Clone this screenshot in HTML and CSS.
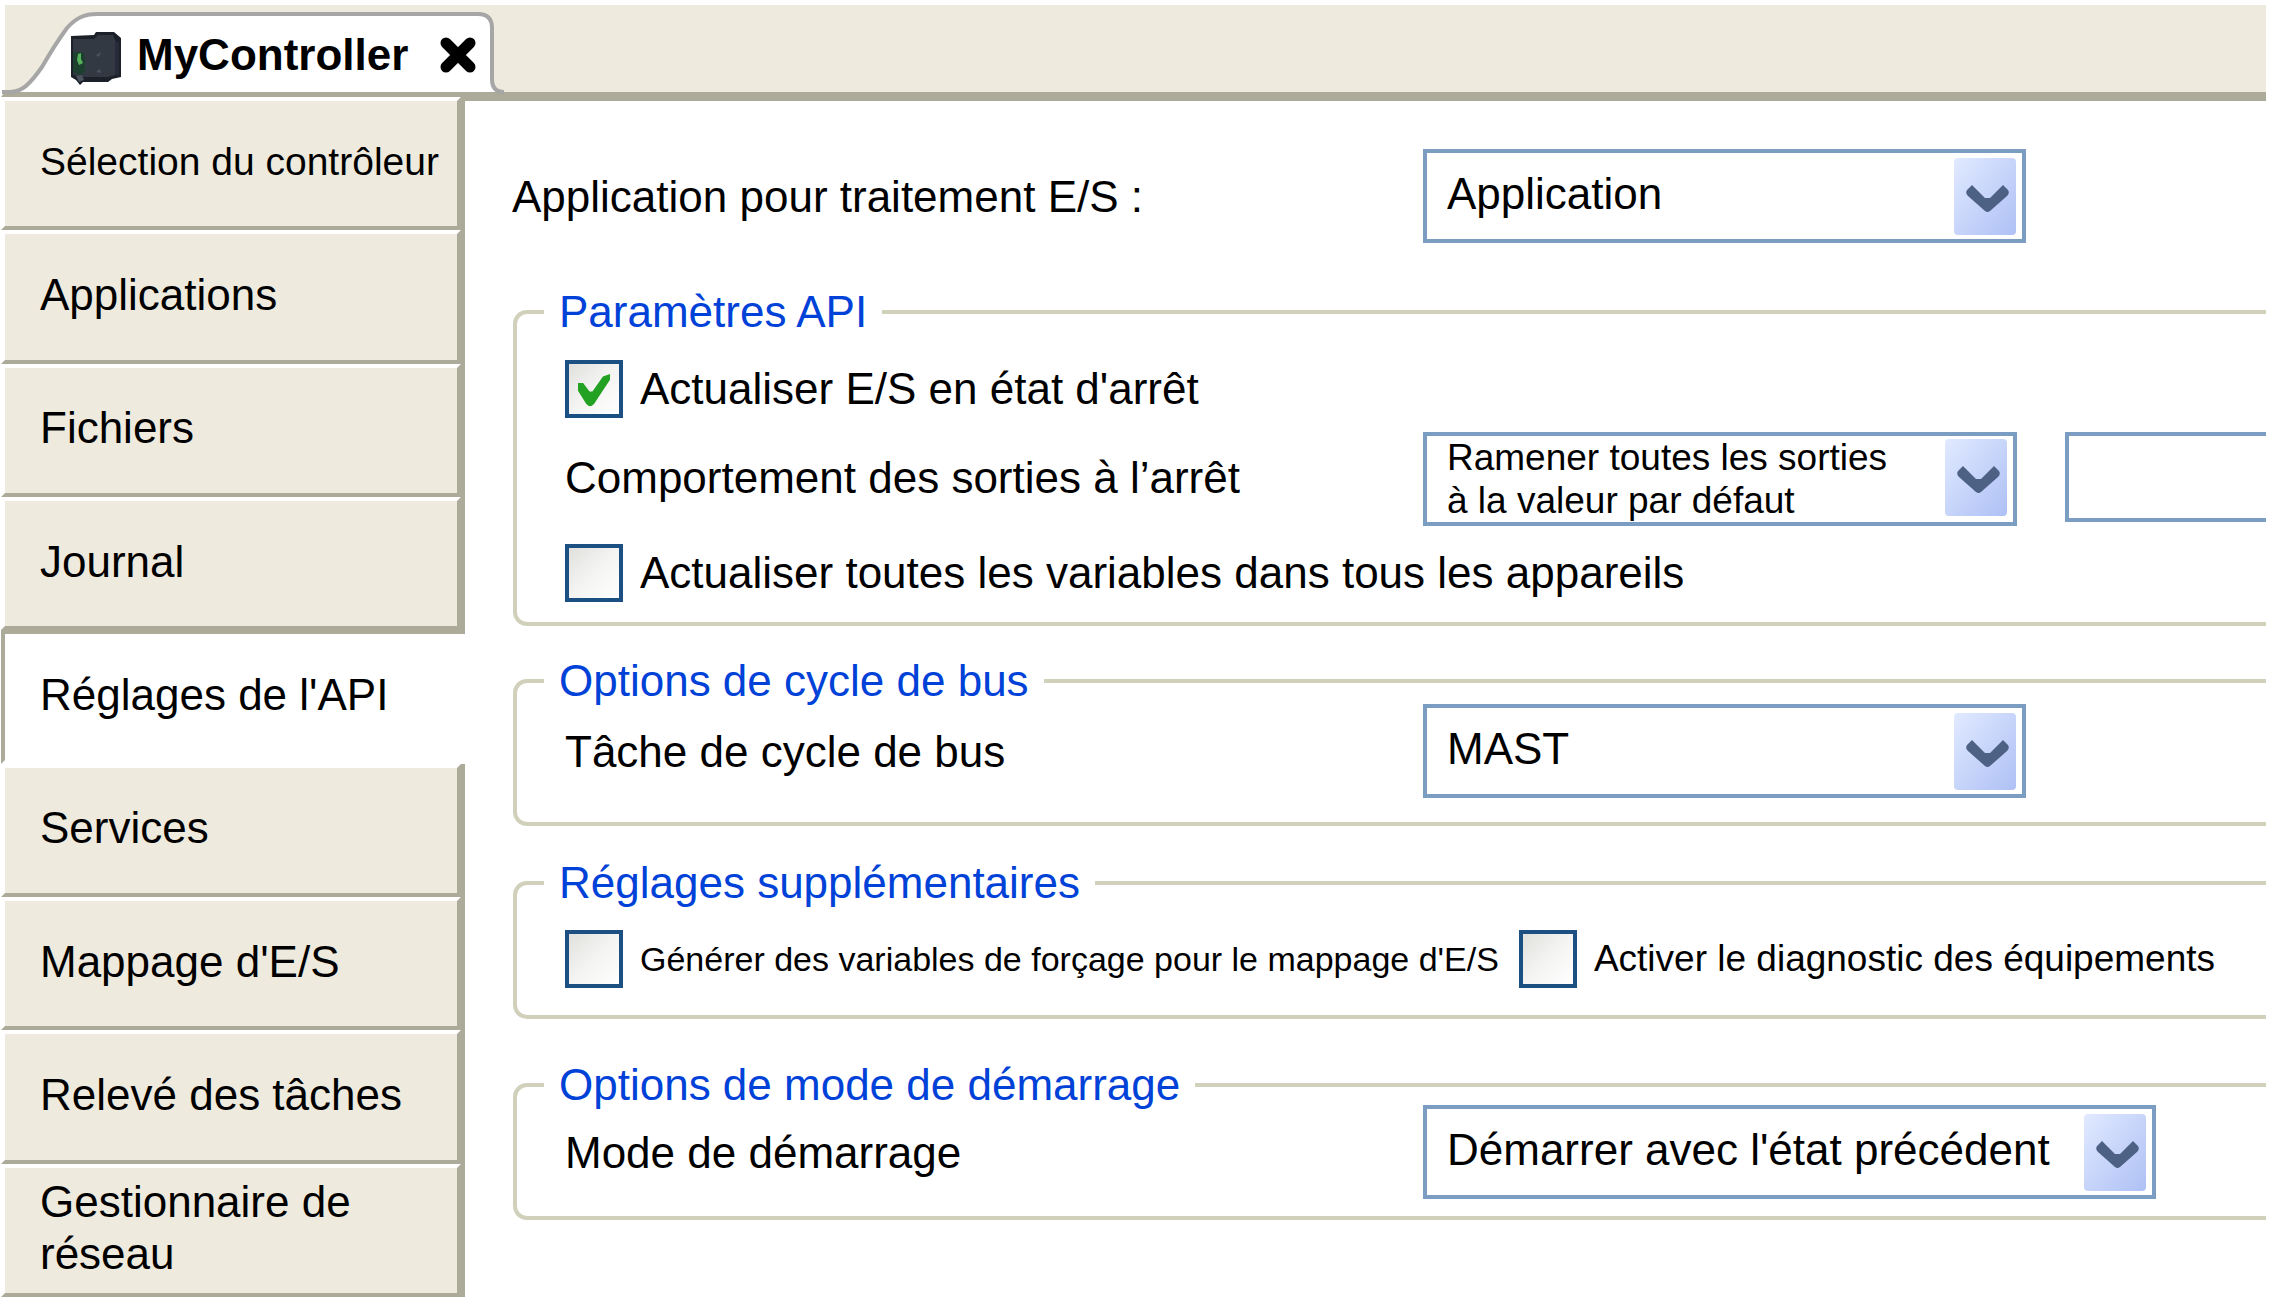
FILE: index.html
```html
<!DOCTYPE html>
<html lang="fr">
<head>
  <meta charset="UTF-8" />
  <meta name="viewport" content="width=device-width, initial-scale=1.0"/>
  <title>MyController</title>
  <link rel="stylesheet" href="styles.css">
</head>
<body>
  <svg class="defs" aria-hidden="true">
    <defs>
      <linearGradient id="comboFill" x1="0" y1="0" x2="1" y2="1">
        <stop offset="0" stop-color="#e1eaff"/>
        <stop offset="1" stop-color="#aec0f5"/>
      </linearGradient>
    </defs>
    <symbol id="comboArrow" viewBox="0 0 62 77">
      <rect width="62" height="77" rx="4" fill="url(#comboFill)"/>
      <path d="M18 27L13 32Q11 35 14 38L31 53Q33.500 55 36 53L53 38Q56 35 54 32L49 27L36 40H31Z" fill="#4d6185"/>
    </symbol>
  </svg>

  <header class="tab-bar">
    <div class="tab">
      <svg class="tab-shape" viewBox="0 0 508 91" aria-hidden="true">
        <path d="M2 87H10C22 87 30 79 42 62C50 48 56 38 67 23C76 13 84 9 97 9H478Q492 9 492 23V74Q492 87 504 87" fill="#fff" stroke="#a6a6a6" stroke-width="4"/>
      </svg>
      <svg class="tab-icon" viewBox="0 0 52 54" aria-hidden="true">
        <path d="M1 4L24 3L26 0H44L51 6V45L42 47L38 50H13L10 53L6 48L1 45Z" fill="#1b2029"/>
        <path d="M3 7H24L28 3H43L45 8V43L38 45H14L3 43Z" fill="#323943"/>
        <path d="M45 8L49 11V43L45 43Z" fill="#252b38"/>
        <path d="M3 20H13L15 26V40L10 43L3 40Z" fill="#1d3f2f"/>
        <path d="M8 22L11 21L11 27L13 31L9 33L7 28Z" fill="#58b25c"/>
        <path d="M26 23L31 20L29 25ZM26 40L30 37L31 41Z" fill="#4b535e"/>
        <path d="M6 44L12 43L14 48L9 50Z" fill="#4b535e"/>
      </svg>
      <span class="tab-title">MyController</span>
      <button class="tab-close" aria-label="Fermer">
        <svg viewBox="0 0 36 36"><path d="M6 6L30 30M30 6L6 30" stroke="#000" stroke-width="11" stroke-linecap="round"/></svg>
      </button>
    </div>
  </header>

  <div class="content">
    <nav class="sidebar">
      <div class="item"><button class="item-button long-label">Sélection du contrôleur</button></div>
      <div class="item"><button class="item-button">Applications</button></div>
      <div class="item"><button class="item-button">Fichiers</button></div>
      <div class="item"><button class="item-button">Journal</button></div>
      <div class="item active"><button class="item-button">Réglages de l'API</button></div>
      <div class="item"><button class="item-button">Services</button></div>
      <div class="item"><button class="item-button">Mappage d'E/S</button></div>
      <div class="item"><button class="item-button">Relevé des tâches</button></div>
      <div class="item"><button class="item-button">Gestionnaire de réseau</button></div>
    </nav>

    <main class="main">
      <div class="row app-row">
        <label class="row-label" for="app">Application pour traitement E/S :</label>
        <div class="combo">
          <select id="app"><option>Application</option></select>
          <svg class="combo-arrow" aria-hidden="true"><use href="#comboArrow"/></svg>
        </div>
      </div>

      <fieldset class="group params">
        <legend>Paramètres API</legend>
        <div class="check">
          <input type="checkbox" id="refresh" checked>
          <label for="refresh">Actualiser E/S en état d'arrêt</label>
        </div>
        <div class="row">
          <label class="row-label" for="stop">Comportement des sorties à l’arrêt</label>
          <div class="combo two-lines">
            <select id="stop"><option>Ramener toutes les sorties à la valeur par défaut</option></select>
            <svg class="combo-arrow" aria-hidden="true"><use href="#comboArrow"/></svg>
          </div>
          <input type="text" class="text-box" aria-label="Valeur">
        </div>
        <div class="check">
          <input type="checkbox" id="allVars">
          <label for="allVars">Actualiser toutes les variables dans tous les appareils</label>
        </div>
      </fieldset>

      <fieldset class="group bus">
        <legend>Options de cycle de bus</legend>
        <div class="row">
          <label class="row-label" for="task">Tâche de cycle de bus</label>
          <div class="combo">
            <select id="task"><option>MAST</option></select>
            <svg class="combo-arrow" aria-hidden="true"><use href="#comboArrow"/></svg>
          </div>
        </div>
      </fieldset>

      <fieldset class="group extra">
        <legend>Réglages supplémentaires</legend>
        <div class="check small">
          <input type="checkbox" id="force">
          <label class="tight" for="force">Générer des variables de forçage pour le mappage d'E/S</label>
        </div>
        <div class="check small">
          <input type="checkbox" id="diag">
          <label for="diag">Activer le diagnostic des équipements</label>
        </div>
      </fieldset>

      <fieldset class="group start">
        <legend>Options de mode de démarrage</legend>
        <div class="row">
          <label class="row-label" for="mode">Mode de démarrage</label>
          <div class="combo wide">
            <select id="mode"><option>Démarrer avec l'état précédent</option></select>
            <svg class="combo-arrow" aria-hidden="true"><use href="#comboArrow"/></svg>
          </div>
        </div>
      </fieldset>
    </main>
  </div>
</body>
</html>
```
FILE: styles.css
```css
* {
  box-sizing: border-box;
}

body {
  margin: 0;
  padding: 5px 26px 1px 1px;
  min-height: 100vh;
  display: flex;
  flex-direction: column;
  background-color: white;
  color: black;
  font-family: "Liberation Sans", Arial, sans-serif;
  font-size: 44px;
  line-height: 50px;
}

button,
input,
select {
  font: inherit;
  color: inherit;
}

.defs {
  position: absolute;
  width: 0;
  height: 0;
}

/* top tab */
.tab-bar {
  border-left: 4px solid white;
  border-bottom: 5px solid #acaa98;
  background-color: #eeeadd;
}

.tab {
  position: relative;
  width: 508px;
  height: 87px;
  margin-left: -5px;
  padding: 0 32px 0 70px;
  display: flex;
  align-items: center;
}

.tab-shape {
  position: absolute;
  left: 0;
  top: 0;
  width: 508px;
  height: 91px;
}

.tab-icon {
  position: relative;
  width: 52px;
  height: 54px;
  margin-top: 20px;
}

.tab-title {
  position: relative;
  margin-top: 12px;
  padding-left: 15px;
  font-weight: bold;
}

.tab-close {
  position: relative;
  width: 36px;
  height: 36px;
  margin: 12px 0 0 auto;
  padding: 0;
  border: none;
  background: none;
  cursor: pointer;
}

.tab-close svg {
  display: block;
}

/* layout */
.content {
  flex: 1;
  display: flex;
}

.sidebar {
  width: 464px;
  display: flex;
  flex-direction: column;
}

.item {
  flex: 1 1 0;
  display: flex;
  border-right: 4px solid #acaa98;
}

.item-button {
  flex: 1;
  padding: 0 40px 4px 35px;
  border: 4px solid;
  border-color: white #acaa98 #acaa98 white;
  background-color: #eeeadd;
  line-height: 52px;
  text-align: left;
  cursor: pointer;
}

.long-label {
  padding-right: 0;
  font-size: 39px;
}

.item.active {
  border-right: none;
}

.active .item-button {
  border-color: #acaa98 white white #acaa98;
  border-right: none;
  background-color: white;
}

.main {
  flex: 1;
  min-width: 0;
  padding: 48px 0 0 47px;
  border-top: 4px solid #acaa98;
}

/* form rows */
.row {
  display: flex;
  align-items: center;
}

.row-label {
  width: 858px;
  padding-top: 2px;
}

.app-row {
  margin-bottom: 44px;
}

.app-row .row-label {
  width: 911px;
}

.combo {
  position: relative;
  width: 603px;
  height: 94px;
}

.combo.two-lines {
  width: 594px;
}

.combo.wide {
  width: 733px;
}

.combo select {
  width: 100%;
  height: 100%;
  padding: 0 70px 4px 20px;
  border: 4px solid #7a9dc1;
  border-radius: 0;
  background-color: white;
  appearance: none;
}

.combo.two-lines select {
  padding-right: 100px;
  padding-bottom: 0;
  font-size: 37px;
  line-height: 43px;
  white-space: normal;
}

.combo-arrow {
  position: absolute;
  top: 9px;
  right: 10px;
  width: 62px;
  height: 77px;
  pointer-events: none;
}

.text-box {
  flex: 1;
  min-width: 0;
  height: 90px;
  margin-left: 48px;
  border: 4px solid #7a9dc1;
  border-right: none;
  border-radius: 0;
}

.check {
  display: flex;
  align-items: center;
  gap: 17px;
}

.check input {
  width: 58px;
  height: 58px;
  margin: 0;
  border: 4px solid #1d5082;
  background: linear-gradient(135deg, #e0e0dc, #f4f4f3 50%, white);
  appearance: none;
}

.check input:checked::before {
  content: "";
  display: block;
  width: 32px;
  height: 32px;
  margin: 10px 0 0 9px;
  background-color: #22a122;
  clip-path: polygon(0 28%, 16% 28%, 36% 55%, 45% 55%, 78% 8%, 100% 0, 100% 18%, 50% 94%, 42% 100%, 34% 100%, 26% 94%, 0 52%);
}

.small {
  font-size: 37px;
}

.tight {
  font-size: 34px;
}

/* groups */
.group {
  min-width: 0;
  margin: 0 0 32px 1px;
  padding: 0 0 0 48px;
  border: 4px solid #d1d0bb;
  border-right: none;
  border-radius: 14px 0 0 14px;
}

.group legend {
  margin-left: -21px;
  padding: 0 15px;
  color: #0042d8;
}

.params {
  margin-bottom: 30px;
  padding-top: 23px;
  padding-bottom: 20px;
}

.params .row {
  margin: 12px 0 20px;
}

.bus {
  padding-bottom: 24px;
}

.bus .row {
  margin-top: -2px;
}

.extra {
  display: flex;
  gap: 20px;
  padding-top: 22px;
  padding-bottom: 27px;
  margin-bottom: 41px;
}

.start {
  margin-bottom: 0;
  padding-bottom: 17px;
}

.start .row {
  margin-top: -5px;
}
```
